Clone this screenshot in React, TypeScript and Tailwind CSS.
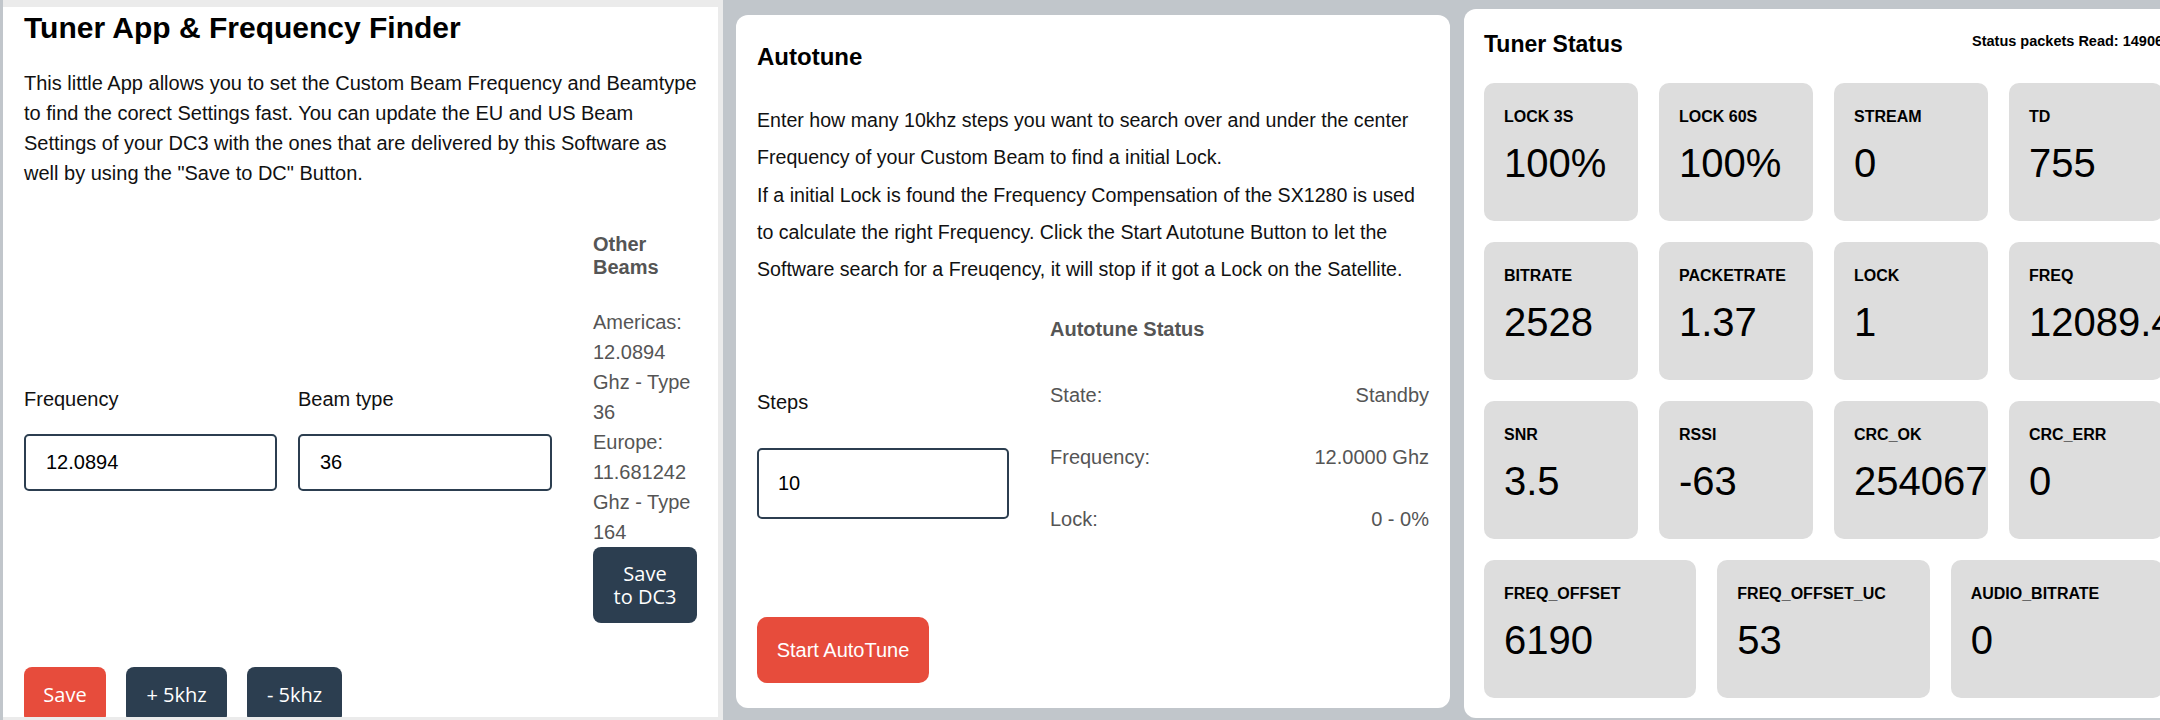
import React from 'react';

const arial = "font-['Liberation_Sans',Arial,sans-serif]";
const ui = "font-['Open_Sans','Noto_Sans',sans-serif]";

const stats = [
  { label: 'LOCK 3S', value: '100%' },
  { label: 'LOCK 60S', value: '100%' },
  { label: 'STREAM', value: '0' },
  { label: 'TD', value: '755' },
  { label: 'BITRATE', value: '2528' },
  { label: 'PACKETRATE', value: '1.37' },
  { label: 'LOCK', value: '1' },
  { label: 'FREQ', value: '12089.4' },
  { label: 'SNR', value: '3.5' },
  { label: 'RSSI', value: '-63' },
  { label: 'CRC_OK', value: '254067' },
  { label: 'CRC_ERR', value: '0' },
];

const wideStats = [
  { label: 'FREQ_OFFSET', value: '6190' },
  { label: 'FREQ_OFFSET_UC', value: '53' },
  { label: 'AUDIO_BITRATE', value: '0' },
];

const StatCard = ({ label, value }: { label: string; value: string }) => (
  <div className="h-[138px] rounded-[10px] bg-[#dddddd] pl-[20px] pt-[25px] whitespace-nowrap">
    <div className="text-[16px] font-bold leading-[18px] text-black">{label}</div>
    <div className="mt-[14px] text-[40px] leading-[46px] text-black">{value}</div>
  </div>
);

export default function App() {
  return (
    <div className={`flex items-start w-[2160px] h-[720px] overflow-hidden bg-[#c1c6cb] pl-[3px] ${arial}`}>
      {/* Tuner App */}
      <div className="shrink-0 w-[720px] h-[720px] bg-[#ebebeb] pt-[7px] pr-[5px] pb-[3px]">
        <div className="w-[715px] h-[710px] overflow-hidden bg-white pl-[21px] pr-[18px] pt-[4px] text-black">
          <h1 className="text-[30px] font-bold leading-[34px]">Tuner App &amp; Frequency Finder</h1>
          <p className="mt-[23px] text-[20px] leading-[30px] text-[#111]">
            This little App allows you to set the Custom Beam Frequency and Beamtype to find the corect Settings fast. You can update the EU and US Beam Settings of your DC3 with the ones that are delivered by this Software as well by using the "Save to DC" Button.
          </p>

          <div className="mt-[45px] flex items-start">
            <div className="mt-[155px] w-[253px]">
              <label className="block text-[20px] leading-[23px] text-[#111]">Frequency</label>
              <input
                readOnly
                value="12.0894"
                className="mt-[23px] h-[57px] w-full rounded-[5px] border-2 border-[#2c3e50] pl-[20px] text-[20px] text-black outline-none"
              />
            </div>
            <div className="ml-[21px] mt-[155px] w-[254px]">
              <label className="block text-[20px] leading-[23px] text-[#111]">Beam type</label>
              <input
                readOnly
                value="36"
                className="mt-[23px] h-[57px] w-full rounded-[5px] border-2 border-[#2c3e50] pl-[20px] text-[20px] text-black outline-none"
              />
            </div>
            <div className="ml-[41px] w-[104px]">
              <h4 className="text-[20px] font-bold leading-[23px] text-[#555]">Other<br />Beams</h4>
              <div className="mt-[28px] text-[20px] leading-[30px] text-[#555]">
                Americas:<br />12.0894<br />Ghz - Type<br />36<br />Europe:<br />11.681242<br />Ghz - Type<br />164
              </div>
              <button className={`h-[76px] w-full rounded-[8px] bg-[#2c3e50] text-[20px] leading-[23px] text-white ${ui}`}>
                Save<br />to DC3
              </button>
            </div>
          </div>

          <div className={`mt-[44px] flex gap-[20px] text-[20px] text-white ${ui}`}>
            <button className="h-[56px] w-[82px] rounded-[8px] bg-[#e74c3c]">Save</button>
            <button className="h-[56px] w-[101px] rounded-[8px] bg-[#2c3e50]">+ 5khz</button>
            <button className="h-[56px] w-[95px] rounded-[8px] bg-[#2c3e50]">- 5khz</button>
          </div>
        </div>
      </div>

      {/* Autotune */}
      <div className="shrink-0 ml-[13px] mt-[15px] w-[714px] h-[693px] rounded-[12px] bg-white px-[21px] pt-[28px] text-black">
        <h2 className="text-[24px] font-bold leading-[28px]">Autotune</h2>
        <p className="mt-[31px] text-[19.6px] leading-[37.3px] text-[#111]">
          Enter how many 10khz steps you want to search over and under the center Frequency of your Custom Beam to find a initial Lock.
          <br />
          If a initial Lock is found the Frequency Compensation of the SX1280 is used to calculate the right Frequency. Click the Start Autotune Button to let the Software search for a Freuqency, it will stop if it got a Lock on the Satellite.
        </p>

        <div className="mt-[30px] flex items-start">
          <div className="mt-[73px] w-[252px]">
            <label className="block text-[20px] leading-[23px] text-[#111]">Steps</label>
            <input
              readOnly
              value="10"
              className="mt-[34px] h-[71px] w-full rounded-[5px] border-2 border-[#2c3e50] pl-[19px] text-[20px] text-black outline-none"
            />
          </div>
          <div className="ml-[41px] w-[379px] text-[#555]">
            <h4 className="text-[20px] font-bold leading-[23px]">Autotune Status</h4>
            <div className="mt-[23px] text-[20px] leading-[23px]">
              <div className="flex h-[62px] items-center justify-between">
                <span>State:</span>
                <span>Standby</span>
              </div>
              <div className="flex h-[62px] items-center justify-between">
                <span>Frequency:</span>
                <span>12.0000 Ghz</span>
              </div>
              <div className="flex h-[62px] items-center justify-between">
                <span>Lock:</span>
                <span>0 - 0%</span>
              </div>
            </div>
          </div>
        </div>

        <button className="mt-[67px] h-[66px] w-[172px] rounded-[10px] bg-[#e74c3c] text-[20px] text-white">
          Start AutoTune
        </button>
      </div>

      {/* Tuner Status */}
      <div className="shrink-0 ml-[14px] mt-[9px] w-[720px] h-[709px] rounded-[12px] bg-white pl-[20px] pt-[22px] text-black">
        <div className="flex w-[679px] items-start justify-between">
          <h2 className="text-[23px] font-bold leading-[27px]">Tuner Status</h2>
          <div className="w-[191px] whitespace-nowrap pt-[2px] text-[14.5px] font-bold leading-[17px]">
            Status packets Read: 149067
          </div>
        </div>

        <div className="mt-[25px] grid w-[679px] grid-cols-4 gap-[21px]">
          {stats.map((s) => (
            <StatCard key={s.label} label={s.label} value={s.value} />
          ))}
        </div>
        <div className="mt-[21px] grid w-[679px] grid-cols-3 gap-[21px]">
          {wideStats.map((s) => (
            <StatCard key={s.label} label={s.label} value={s.value} />
          ))}
        </div>
      </div>
    </div>
  );
}
